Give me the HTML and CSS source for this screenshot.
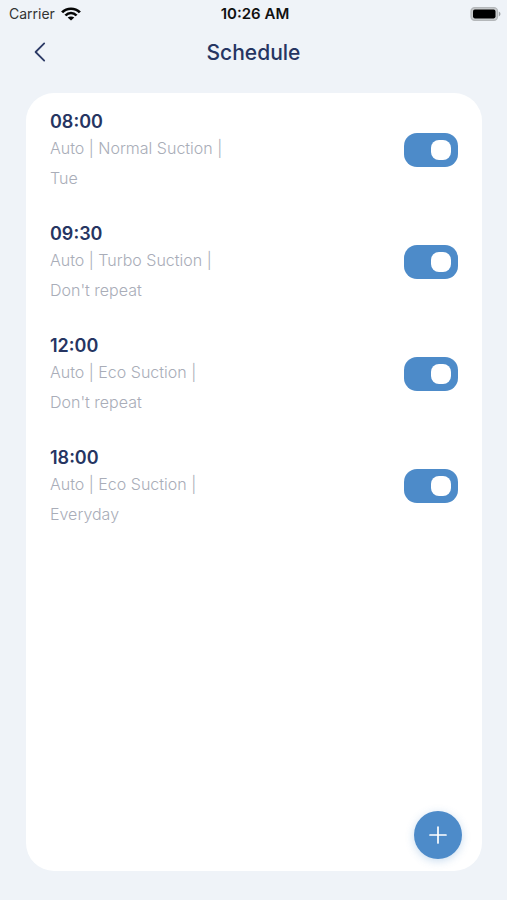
FILE: index.html
```html
<!DOCTYPE html>
<html lang="en">
<head>
<meta charset="utf-8">
<meta name="viewport" content="width=device-width, initial-scale=1">
<title>Schedule</title>
<link rel="stylesheet" href="styles.css">
</head>
<body>
<div class="status">
  <div class="carrier"><span>Carrier</span>
    <svg width="20" height="14" viewBox="0 0 18 14" preserveAspectRatio="none" fill="none" stroke="#050505" stroke-width="2.5" aria-hidden="true"><path d="M1 5.3C5.5 .4 12.5 .4 17 5.3M4 8.5C7 5.3 11 5.3 14 8.5"/><path d="M9 13.6 6 10.6C7.6 9.1 10.4 9.1 12 10.6Z" fill="#050505" stroke="none"/></svg>
  </div>
  <time class="clock">10:26 AM</time>
  <svg class="battery" width="31" height="14" viewBox="0 0 31 14" aria-hidden="true"><rect x="1" y=".7" width="26.5" height="12.6" rx="3.6" fill="#c9cbcd" stroke="#b4b7ba" stroke-width="1.2"/><rect x="3" y="2.6" width="22.5" height="8.8" rx="1.8" fill="#000"/><path d="M28.8 4.6C31 5.4 31 8.6 28.8 9.4Z" fill="#9fa2a5"/></svg>
</div>
<header class="header">
  <button class="back" type="button" aria-label="Back"><svg width="12" height="20" viewBox="0 0 12 20" fill="none" stroke="#2c3a66" stroke-width="1.8" stroke-linecap="round" stroke-linejoin="round"><path d="M10.2 1.4 1.6 10l8.6 8.6"/></svg></button>
  <h1 class="title">Schedule</h1>
</header>
<main class="card">
  <ul class="list">
    <li class="item"><label class="info" for="s1"><span class="hour">08:00</span><span class="detail">Auto | Normal Suction |</span><span class="detail">Tue</span></label><input class="switch" id="s1" type="checkbox" role="switch" checked></li>
    <li class="item"><label class="info" for="s2"><span class="hour">09:30</span><span class="detail">Auto | Turbo Suction |</span><span class="detail">Don't repeat</span></label><input class="switch" id="s2" type="checkbox" role="switch" checked></li>
    <li class="item"><label class="info" for="s3"><span class="hour">12:00</span><span class="detail">Auto | Eco Suction |</span><span class="detail">Don't repeat</span></label><input class="switch" id="s3" type="checkbox" role="switch" checked></li>
    <li class="item"><label class="info" for="s4"><span class="hour">18:00</span><span class="detail">Auto | Eco Suction |</span><span class="detail">Everyday</span></label><input class="switch" id="s4" type="checkbox" role="switch" checked></li>
  </ul>
  <button class="add" type="button" aria-label="Add schedule"><svg width="18" height="18" viewBox="0 0 18 18" stroke="#fff" stroke-width="1.7" stroke-linecap="round"><path d="M9 1v16M1 9h16"/></svg></button>
</main>
</body>
</html>
```
FILE: styles.css
```css
* {
  box-sizing: border-box;
}

body {
  margin: 0;
  min-height: 100vh;
  display: flex;
  flex-direction: column;
  background: #eff3f8;
  color: #263562;
  font-family: Inter, "Liberation Sans", sans-serif;
}

.status {
  display: grid;
  grid-template-columns: 1fr auto 1fr;
  align-items: center;
  height: 27px;
  padding: 0 6px 0 9px;
  color: #111;
  font-size: 14px;
}

.carrier {
  display: flex;
  align-items: center;
  gap: 6px;
  color: #333;
}

.clock {
  font-size: 15px;
  font-weight: 600;
}

.battery {
  justify-self: end;
}

.header {
  display: grid;
  grid-template-columns: 1fr auto 1fr;
  align-items: center;
  height: 50px;
  padding: 0 24px;
}

.back {
  display: flex;
  align-items: center;
  justify-content: center;
  width: 32px;
  height: 32px;
  padding: 0;
  border: 0;
  background: none;
}

.title {
  margin: 0;
  font-size: 21px;
  font-weight: 500;
}

.card {
  position: relative;
  flex: 1;
  margin: 16px 25px 29px 26px;
  border-radius: 28px;
  background: #fff;
}

.list {
  margin: 0;
  padding: 1px 24px 64px;
  list-style: none;
}

.item {
  display: flex;
  align-items: center;
  justify-content: space-between;
  height: 112px;
}

.info {
  display: flex;
  flex-direction: column;
  padding-top: 4px;
}

.hour {
  font-size: 18px;
  font-weight: 600;
  line-height: 22px;
}

.detail {
  color: #a9adb8;
  font-size: 16px;
  font-weight: 300;
  line-height: 30px;
}

.switch {
  appearance: none;
  display: flex;
  align-items: center;
  justify-content: flex-start;
  width: 54px;
  height: 34px;
  margin: 0;
  padding: 0 7px;
  border-radius: 13px;
  background: #b2b6c0;
}

.switch:checked {
  justify-content: flex-end;
  background: #4d8bc9;
}

.switch::before {
  content: "";
  width: 20px;
  height: 20px;
  border-radius: 8px;
  background: #fff;
}

.add {
  position: absolute;
  right: 20px;
  bottom: 12px;
  display: flex;
  align-items: center;
  justify-content: center;
  width: 48px;
  height: 48px;
  padding: 0;
  border: 0;
  border-radius: 50%;
  background: #4d8bc9;
  box-shadow: 0 2px 8px rgba(77, 139, 201, 0.3);
}
```
